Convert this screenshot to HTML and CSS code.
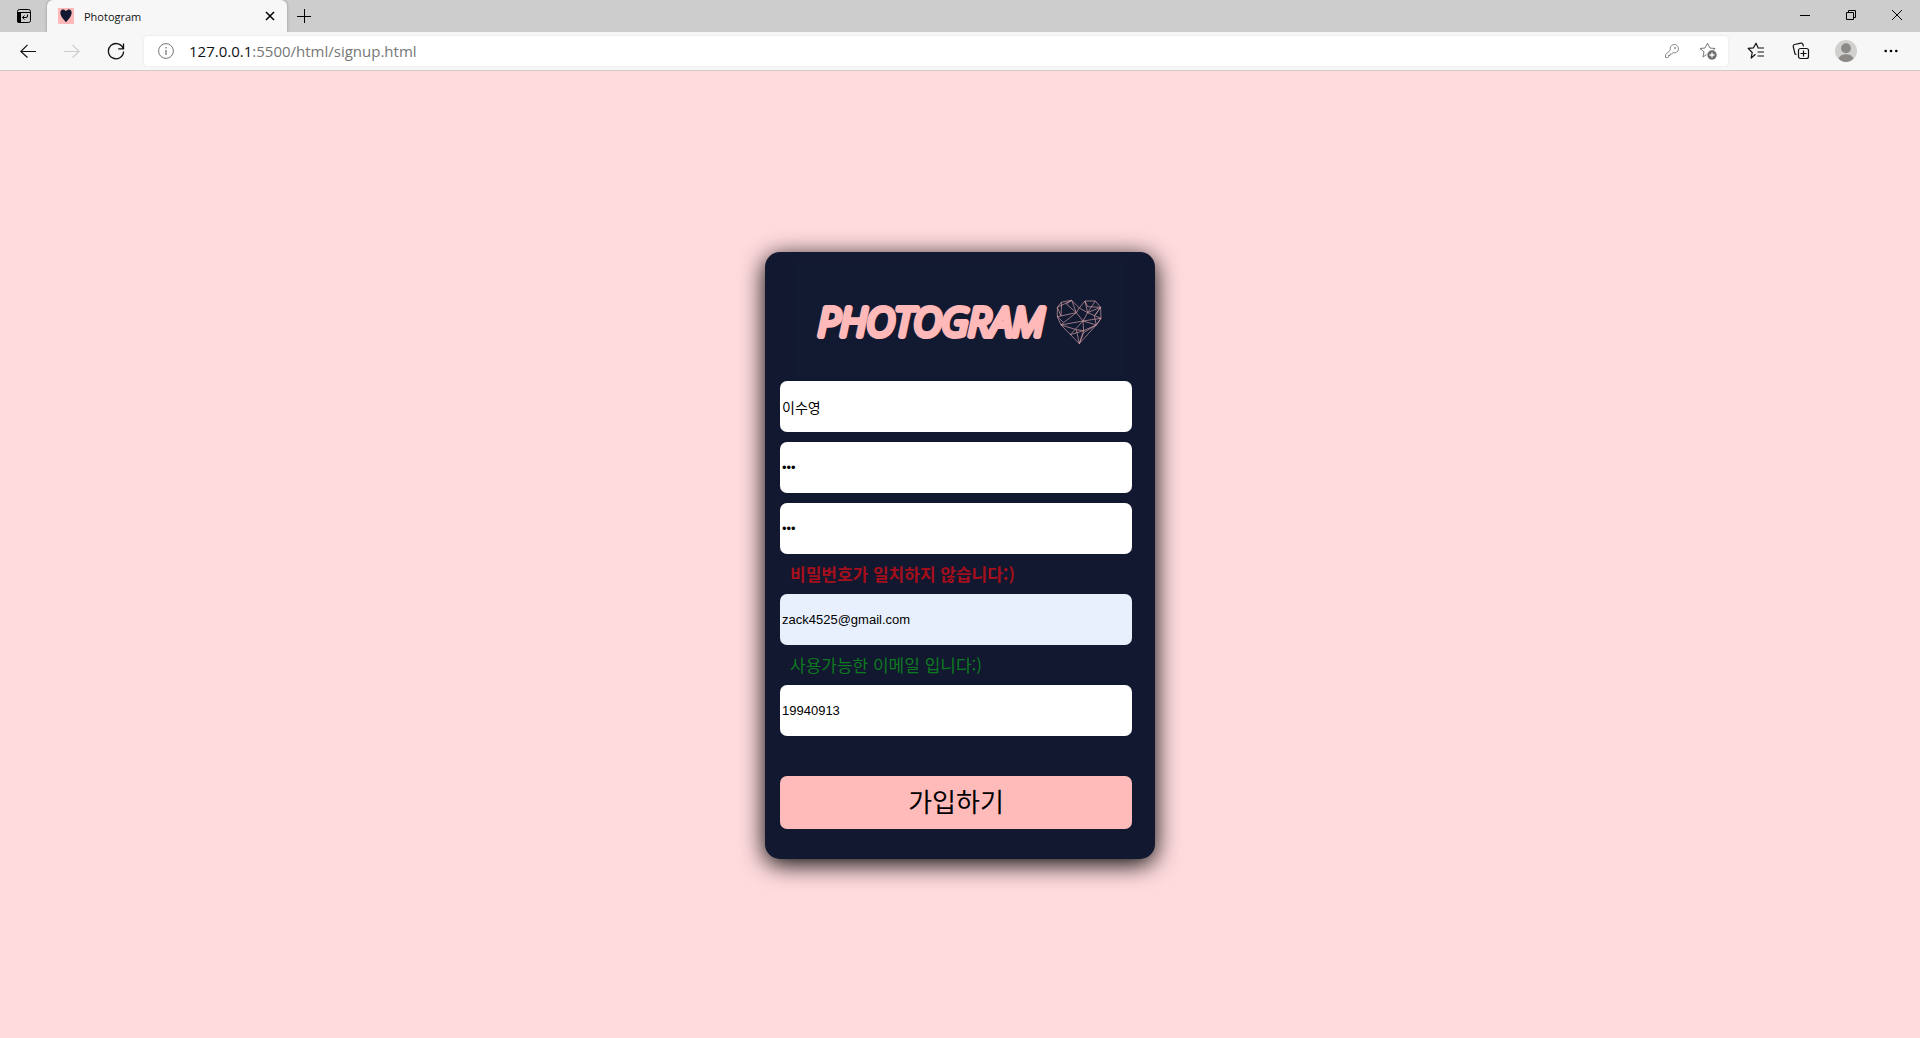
FILE: index.html
```
<!DOCTYPE html>
<html lang="ko">
<head>
<meta charset="utf-8">
<title>Photogram</title>
<link rel="stylesheet" href="styles.css">
</head>
<body>
<header class="browser">
  <div class="tabs">
    <button class="tab-actions" aria-label="Tab actions">
      <svg width="16" height="16" viewBox="0 0 16 16"><rect x="1.5" y="1.5" width="13" height="13" rx="2" fill="none" stroke="#000"/><path d="M1 5h4v10H3a2 2 0 0 1-2-2z"/><path d="M1.500 4.500h13M11.500 6.500v1.500q0 1.500-1.500 1.500H6.500M8.500 7.500l-2 2 2 2" fill="none" stroke="#000"/></svg>
    </button>
    <div class="tab">
      <svg width="16" height="16" viewBox="0 0 16 16"><path fill="#ffb9b9" d="M0 0h16v16H0z"/><path fill="#11182f" d="M8 3.300C9.500 1 12 1 13.200 2.800c1.200 2-.1 5-1.400 7L8 14.300 4.200 9.800c-1.300-2-2.600-5-1.400-7C4 1 6.500 1 8 3.300z"/></svg>
      <span class="tab-title">Photogram</span>
      <button class="tab-close" aria-label="Close tab"><svg width="10" height="10" viewBox="0 0 10 10"><path d="M1 1l8 8M9 1L1 9" stroke="#000" stroke-width="1.500"/></svg></button>
    </div>
    <button class="tab-new" aria-label="New tab"><svg width="14" height="14" viewBox="0 0 14 14"><path d="M0 7.500h14M7.500 0v14" stroke="#000"/></svg></button>
    <div class="window-controls">
      <button class="window-button" aria-label="Minimize"><svg width="10" height="10" viewBox="0 0 10 10"><path d="M0 5.500h10" stroke="#000"/></svg></button>
      <button class="window-button" aria-label="Restore"><svg width="10" height="10" viewBox="0 0 10 10"><path d="M.5 2.500h7v7h-7zM2.500 2.500v-2h7v7h-2" fill="none" stroke="#000"/></svg></button>
      <button class="window-button" aria-label="Close"><svg width="10" height="10" viewBox="0 0 10 10"><path d="M0 0l10 10M10 0L0 10" stroke="#000"/></svg></button>
    </div>
  </div>
  <div class="toolbar">
    <button class="tool" aria-label="Back"><svg width="16" height="14" viewBox="0 0 16 14"><path d="M16 7.500H1M7.500.8L.8 7.500l6.700 6" fill="none" stroke="#111" stroke-width="1.200"/></svg></button>
    <button class="tool" aria-label="Forward" disabled><svg width="16" height="14" viewBox="0 0 16 14"><path d="M0 7.500h15M8.500.8l6.700 6.700-6.700 6" fill="none" stroke="#ccc" stroke-width="1.200"/></svg></button>
    <button class="tool" aria-label="Reload"><svg width="18" height="18" viewBox="0 0 18 18"><path d="M16.300 7A7.600 7.600 0 1 0 16.600 9.500M16.500 1.500v5.300h-5.300" fill="none" stroke="#111" stroke-width="1.300"/></svg></button>
    <div class="address">
      <svg width="16" height="16" viewBox="0 0 16 16"><circle cx="8" cy="8" r="7.400" fill="none" stroke="#777"/><path d="M8 7v5M8 4v1.500" stroke="#777" stroke-width="1.300"/></svg>
      <span class="url"><span class="url-host">127.0.0.1</span>:5500/html/signup.html</span>
      <button class="address-button" aria-label="Password"><svg width="16" height="16" viewBox="0 0 16 16"><path d="M1.500 14.500v-2.800L6.300 7A4.200 4.200 0 1 1 9 9.700L7.500 11H6v1.500H4.500V14l-.7.500z" fill="none" stroke="#888" stroke-linejoin="round"/><circle cx="11" cy="5" r="1" fill="#888"/></svg></button>
      <button class="address-button" aria-label="Add to favorites"><svg width="18" height="18" viewBox="0 0 18 18"><path d="M7.500 12.500L4 15l1-5.200L1 6.500l5-.5 2.500-4.800L11 6l5 .5-2 2" fill="none" stroke="#777" stroke-linejoin="round"/><circle cx="13" cy="13" r="4.700" fill="#6d6d6d"/><path d="M13 10.500v5M10.500 13h5" stroke="#fff" stroke-width="1.300"/></svg></button>
    </div>
    <button class="tool tool-wide" aria-label="Favorites"><svg width="18" height="18" viewBox="0 0 18 18"><path d="M8.500 12.200L4.200 16l1-5.500-4-4.200 5.300-.5L9 1.200l2 4.300M10.500 6h6.500M10.500 10h6.500M10.500 14h6.500" fill="none" stroke="#111" stroke-width="1.200" stroke-linejoin="round"/></svg></button>
    <button class="tool tool-wide" aria-label="Collections"><svg width="18" height="18" viewBox="0 0 18 18"><path d="M4.500 12.500L3 12 1.200 4.500Q1 3 2.500 2.500L9 1.200q1.500-.2 2 1.300l.4 2" fill="none" stroke="#111" stroke-width="1.200"/><rect x="6.500" y="6.500" width="10" height="10" rx="2" fill="none" stroke="#111" stroke-width="1.200"/><path d="M11.500 8.500v6M8.500 11.500h6" stroke="#111" stroke-width="1.200"/></svg></button>
    <button class="tool tool-wide" aria-label="Profile"><svg width="22" height="22" viewBox="0 0 22 22"><circle cx="11" cy="11" r="11" fill="#d2d0ce"/><circle cx="11" cy="8.200" r="5" fill="#8d8986"/><path d="M3.600 18.500C5 15 8 14.200 11 14.200s6 .8 7.400 4.300C16.500 20.700 14 22 11 22s-5.500-1.300-7.400-3.500z" fill="#8d8986"/></svg></button>
    <button class="tool tool-wide" aria-label="Settings and more"><svg width="14" height="4" viewBox="0 0 14 4"><circle cx="1.700" cy="2" r="1.300"/><circle cx="7" cy="2" r="1.300"/><circle cx="12.300" cy="2" r="1.300"/></svg></button>
  </div>
</header>
<main class="page">
  <form class="card">
    <h1 class="logo">
      <svg width="330" height="114" viewBox="0 0 330 114">
        <path class="logo-plate" d="M0 0h330v114H0z"/>
        <text class="logo-text" x="23" y="74">PHOTOGRAM</text>
        <g class="logo-heart" transform="translate(262 38) scale(.333)"><path d="M14 6L44 1 67 24 84 3 115 3 131 22 132 55 118 75 67 131 12 75 1 50 1 22z"/><path d="M14 6L12 48 1 22 44 1 28 12 58 38 67 24 92 38 84 3 92 20 131 22 92 38 115 3M1 50L12 48 58 38 20 68 1 50M20 68L12 75 78 63 58 38 44 1M78 63L92 38 132 55 78 63 40 104 80 92 78 63 118 75 132 55M58 89L12 75M58 89L80 92 118 75 80 98 67 131 58 89M80 92L67 131M115 45L131 22 112 48 118 75"/></g>
      </svg>
    </h1>
    <input class="field field-name" type="text" aria-label="이름" value="이수영">
    <input class="field" type="password" aria-label="비밀번호" value="123">
    <input class="field" type="password" aria-label="비밀번호 확인" aria-describedby="password-message" value="124">
    <p class="message message-error" id="password-message">비밀번호가 일치하지 않습니다:)</p>
    <input class="field field-filled" type="email" aria-label="이메일" aria-describedby="email-message" value="zack4525@gmail.com">
    <p class="message message-ok" id="email-message">사용가능한 이메일 입니다:)</p>
    <input class="field" type="text" aria-label="생년월일" value="19940913">
    <button class="submit" type="submit">가입하기</button>
  </form>
</main>
</body>
</html>
```
FILE: styles.css
```
* { box-sizing: border-box; }

body {
  margin: 0;
  min-height: 100vh;
  display: flex;
  flex-direction: column;
  background: #ffdbde;
  font-family: "Liberation Sans", "Noto Sans CJK KR", sans-serif;
}

button {
  border: 0;
  padding: 0;
  background: none;
  font: inherit;
}

svg { display: block; flex: none; }

.browser { font-family: "Open Sans", sans-serif; }

.tabs {
  display: flex;
  height: 32px;
  background: #cdcdcd;
}
.tab-actions, .tab-new {
  display: flex;
  align-items: center;
  justify-content: center;
}
.tab-actions { width: 47px; }
.tab-new { width: 34px; }
.tab {
  display: flex;
  align-items: center;
  width: 240px;
  padding: 0 12px 0 11px;
  gap: 10px;
  background: #f7f7f7;
  border-radius: 6px 6px 0 0;
  box-shadow: 0 0 3px rgba(0, 0, 0, .3);
}
.tab-title { flex: 1; font-size: 11px; color: #111; }
.window-controls { display: flex; margin-left: auto; height: 29px; }
.window-button {
  display: flex;
  align-items: center;
  justify-content: center;
  width: 46px;
}

.toolbar {
  position: relative;
  display: flex;
  align-items: center;
  height: 39px;
  padding: 0 7px 0 6px;
  background: #f7f7f7;
  border-bottom: 1px solid #ccc;
}
.tool {
  display: flex;
  align-items: center;
  justify-content: center;
  width: 44px;
  height: 30px;
}
.tool-wide { width: 45px; }
.address {
  flex: 1;
  display: flex;
  align-items: center;
  height: 30px;
  margin: 0 5px 0 6px;
  padding: 0 11px 0 14px;
  background: #fff;
  border-radius: 4px;
  box-shadow: 0 0 3px rgba(0, 0, 0, .08);
}
.url { flex: 1; margin-left: 15px; font-size: 15px; color: #767676; }
.url-host { color: #111; }
.address-button { margin-left: 19px; }

.page {
  flex: 1;
  display: flex;
  align-items: center;
  justify-content: center;
  padding-top: 2px;
}
.card {
  display: flex;
  flex-direction: column;
  width: 390px;
  padding: 0 23px 30px 15px;
  background: #11182f;
  border-radius: 15px;
  box-shadow: 0 5px 24px #000;
}
.logo {
  height: 129px;
  margin: 0;
  padding: 10px 0 0 15px;
}
.logo-plate { fill: #121a32; }
.logo-text {
  font: italic 300 39px "Open Sans", sans-serif;
  fill: #ffb9b9;
  stroke: #ffb9b9;
  stroke-width: 6px;
  stroke-linejoin: round;
}
.logo-heart {
  fill: none;
  stroke: #d9a1a8;
  stroke-width: 2px;
  stroke-linejoin: round;
}

.field {
  width: 100%;
  height: 51px;
  margin: 0 0 10px;
  padding: 1px 2px;
  border: 0;
  border-radius: 7px;
  background: #fff;
  color: #000;
  font: 13px "Liberation Sans", "Noto Sans CJK KR", sans-serif;
}
.field-name { font-size: 14px; }
.field-filled { background: #e8f0fe; }
.message {
  height: 40px;
  margin: -10px 0 0;
  padding-left: 10px;
  font: 17px/40px "Noto Sans CJK KR", sans-serif;
}
.message-error { color: #a50f1c; font-weight: bold; }
.message-ok { color: #0d7a1f; }
.submit {
  height: 53px;
  margin-top: 30px;
  padding-bottom: 4px;
  border-radius: 7px;
  background: #ffbaba;
  color: #000;
  font: 26px "Noto Sans CJK KR", sans-serif;
}
```
